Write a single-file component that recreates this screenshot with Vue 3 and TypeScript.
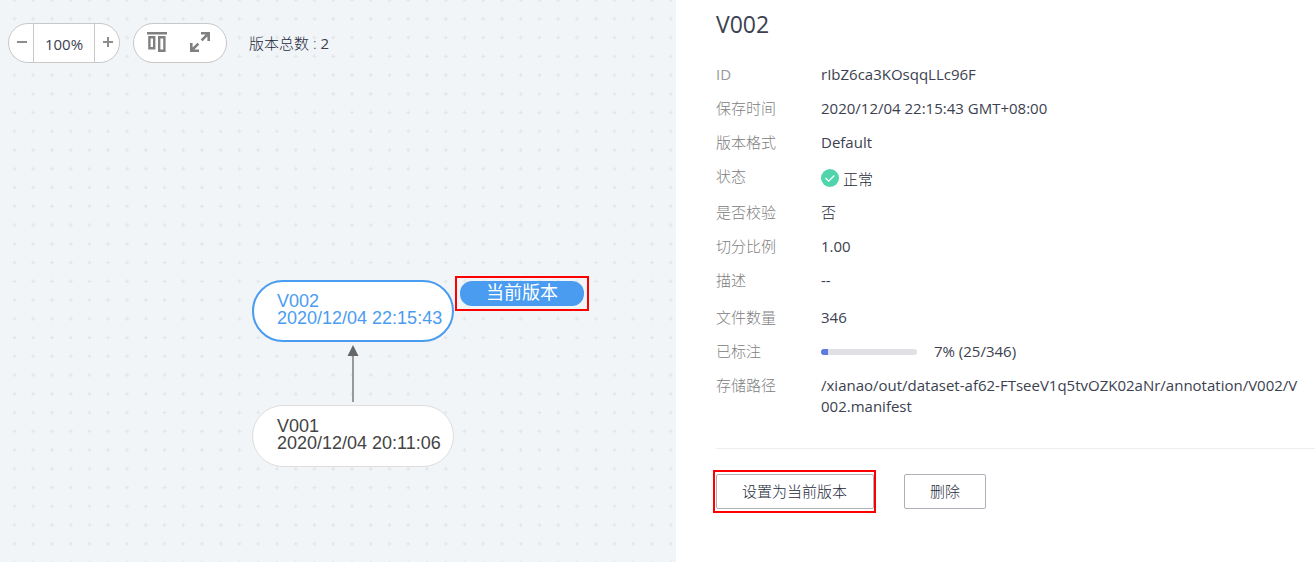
<script setup lang="ts">
import { ref } from 'vue'

interface Detail {
  key: string
  label: string
  value: string
}

interface VersionNode {
  name: string
  time: string
  current: boolean
}

const details: Detail[] = [
  { key: 'id', label: 'ID', value: 'rIbZ6ca3KOsqqLLc96F' },
  { key: 'time', label: '保存时间', value: '2020/12/04 22:15:43 GMT+08:00' },
  { key: 'format', label: '版本格式', value: 'Default' },
  { key: 'status', label: '状态', value: '正常' },
  { key: 'verify', label: '是否校验', value: '否' },
  { key: 'ratio', label: '切分比例', value: '1.00' },
  { key: 'desc', label: '描述', value: '--' },
  { key: 'count', label: '文件数量', value: '346' },
  { key: 'progress', label: '已标注', value: '7% (25/346)' },
  { key: 'path', label: '存储路径', value: '/xianao/out/dataset-af62-FTseeV1q5tvOZK02aNr/annotation/V002/V002.manifest' },
]

const nodes: VersionNode[] = [
  { name: 'V002', time: '2020/12/04 22:15:43', current: true },
  { name: 'V001', time: '2020/12/04 20:11:06', current: false },
]

const percent = 7
const zoom = ref(100)
const steps = [0, 1, 2, 3]

// Chinese text is set in the light weight, Latin text in the regular one.
const isLatin = (text: string) => /^[\x20-\x7e]+$/.test(text)
</script>

<template>
  <div class="page">
    <section class="canvas">
      <svg class="dots" aria-hidden="true">
        <defs>
          <pattern id="dots" x="12" y="-9" width="75" height="75" patternUnits="userSpaceOnUse" viewBox="0 0 300 300">
            <template v-for="r in steps" :key="r">
              <path v-for="c in steps" :key="c" :d="`M${c * 75 + 2} ${r * 75 + 36}h16M${c * 75 + 10} ${r * 75 + 28}v16`" stroke="#e2e7ea" stroke-width="5" />
            </template>
          </pattern>
        </defs>
        <rect width="100%" height="100%" fill="url(#dots)" />
      </svg>

      <header class="toolbar">
        <div class="pill zoom">
          <button type="button" aria-label="缩小" @click="zoom -= 10">
            <svg width="10" height="10" viewBox="0 0 10 10"><path d="M0 5h10" stroke="#8c8c8c" stroke-width="2" /></svg>
          </button>
          <span class="level latin">{{ zoom }}%</span>
          <button type="button" aria-label="放大" @click="zoom += 10">
            <svg width="10" height="10" viewBox="0 0 10 10"><path d="M0 5h10M5 0v10" stroke="#8c8c8c" stroke-width="2" /></svg>
          </button>
        </div>
        <div class="pill tools">
          <button type="button" aria-label="布局">
            <svg width="20" height="20" viewBox="0 0 20 20" fill="none" stroke="#808080" stroke-width="2.400">
              <path d="M0 1.200h20M2.400 5.200h4.800v11H2.400zM12.200 5.200h5.200v13.600h-5.200z" />
            </svg>
          </button>
          <button type="button" aria-label="全屏">
            <svg width="20" height="20" viewBox="0 0 20 20" fill="none" stroke="#808080" stroke-width="2.600">
              <path d="M11 1.300h7.700V9M18.500 1.500l-6.900 6.900M1.300 11v7.700H9M1.500 18.500l6.900-6.900" />
            </svg>
          </button>
        </div>
        <span class="total">版本总数 : <span class="latin">2</span></span>
      </header>

      <div class="graph">
        <div v-for="n in nodes" :key="n.name" class="node" :class="n.current ? 'active' : 'previous'">
          <div>{{ n.name }}</div>
          <div>{{ n.time }}</div>
        </div>
        <svg class="arrow" width="12" height="57" viewBox="0 0 12 57">
          <path d="M6 10v47" stroke="#999" stroke-width="2" />
          <path d="M6 0l5.500 11h-11z" fill="#666" />
        </svg>
        <div class="mark"><span class="badge">当前版本</span></div>
      </div>
    </section>

    <aside class="panel">
      <h1 class="latin">V002</h1>
      <dl>
        <div v-for="d in details" :key="d.key" class="row" :class="d.key">
          <dt :class="{ latin: isLatin(d.label) }">{{ d.label }}</dt>
          <dd>
            <svg v-if="d.key === 'status'" class="ok" width="18" height="18" viewBox="0 0 18 18">
              <circle cx="9" cy="9" r="9" fill="#50d4ab" />
              <path d="M4.500 9l3.200 3.200 5.700-5.700" fill="none" stroke="#fff" stroke-width="1.300" />
            </svg>
            <span v-if="d.key === 'progress'" class="track" role="progressbar" :aria-valuenow="percent" aria-label="已标注">
              <span class="fill" :style="{ width: percent + '%' }"></span>
            </span>
            <span class="value" :class="{ latin: isLatin(d.value) }">{{ d.value }}</span>
          </dd>
        </div>
      </dl>
      <footer class="actions">
        <div class="highlight"><button type="button">设置为当前版本</button></div>
        <button type="button">删除</button>
      </footer>
    </aside>
  </div>
</template>

<style>
body {
  margin: 0;
}
</style>

<style scoped>
.page {
  display: grid;
  grid-template-columns: 676fr 639fr;
  min-height: 100vh;
  background: #fff;
  color: #252b3a;
  font: 300 15px/21px "Open Sans", "Noto Sans CJK SC", sans-serif;
}

.latin {
  color: #3c4150;
  font-weight: 400;
}

button {
  margin: 0;
  padding: 0;
  border: 0;
  background: none;
  color: inherit;
  font: inherit;
  cursor: pointer;
}

.canvas {
  position: relative;
  overflow: hidden;
  background: #f2f5f8;
}

.dots {
  position: absolute;
  inset: 0;
  width: 100%;
  height: 100%;
}

.toolbar {
  position: relative;
  display: flex;
  align-items: center;
  padding: 23px 8px 0;
}

.pill {
  display: flex;
  box-sizing: border-box;
  height: 40px;
  border: 1px solid #c8c8c8;
  border-radius: 20px;
  background: #fff;
}

.pill button {
  display: flex;
  align-items: center;
  justify-content: center;
  padding-bottom: 2px;
}

.zoom button {
  width: 24px;
  padding-left: 2px;
}

.level {
  width: 60px;
  border: solid #c8c8c8;
  border-width: 0 1px;
  line-height: 40px;
  text-align: center;
}

.tools {
  gap: 23px;
  margin-left: 13px;
  padding: 0 16px 0 13px;
}

.total {
  margin-left: 22px;
}

.graph {
  position: absolute;
  top: 276px;
  left: 252px;
  font: 18px/17px "Liberation Sans", "Noto Sans CJK SC", sans-serif;
}

.node {
  position: absolute;
  left: 0;
  box-sizing: border-box;
  width: 202px;
  height: 62px;
  border-radius: 31px;
  background: #fff;
  white-space: nowrap;
}

.active {
  top: 4px;
  padding: 11px 0 0 23px;
  border: 2px solid #4a9cf0;
  color: #4a9cf0;
}

.previous {
  top: 129px;
  padding: 12px 0 0 24px;
  border: 1px solid #ddd;
  color: #444;
}

.arrow {
  position: absolute;
  top: 69px;
  left: 95px;
}

.mark {
  position: absolute;
  top: 0;
  left: 203px;
  padding: 3px;
  border: 2px solid #f00;
}

.badge {
  display: block;
  width: 124px;
  border-radius: 12px;
  background: #4a9cf0;
  color: #fff;
  line-height: 25px;
  text-align: center;
}

.panel {
  padding: 9px 0 40px 40px;
}

h1 {
  margin: 0;
  font-size: 23px;
  line-height: 30px;
}

dl {
  margin: 25px 0 0;
  padding-bottom: 18px;
  border-bottom: 1px solid #eee;
}

.row {
  display: flex;
  margin-bottom: 13px;
}

dt {
  flex: 0 0 105px;
  color: #808080;
}

dt.latin {
  color: #999;
}

dd {
  display: flex;
  align-items: center;
  flex: 1;
  min-width: 0;
  margin: 0;
  padding-right: 14px;
}

.value {
  min-width: 0;
  word-break: break-all;
}

.ok {
  margin-right: 4px;
}

.status .value {
  padding-top: 4px;
}

.status {
  height: 23px;
}

.desc {
  height: 24px;
  align-items: flex-start;
}

.track {
  width: 96px;
  height: 6px;
  margin-right: 17px;
  border-radius: 3px;
  background: #dfe1e6;
  overflow: hidden;
}

.fill {
  display: block;
  height: 100%;
  background: #5e7ce0;
}

.actions {
  display: flex;
  align-items: center;
  gap: 28px;
  margin: 21px 0 0 -3px;
}

.highlight {
  padding: 2px 0 2px 1px;
  border: 2px solid #f00;
}

.actions button {
  display: block;
  padding: 6px 25px;
  border: 1px solid #adb0b8;
  border-radius: 2px;
  background: #fff;
}

.highlight button {
  padding-right: 26px;
}
</style>
